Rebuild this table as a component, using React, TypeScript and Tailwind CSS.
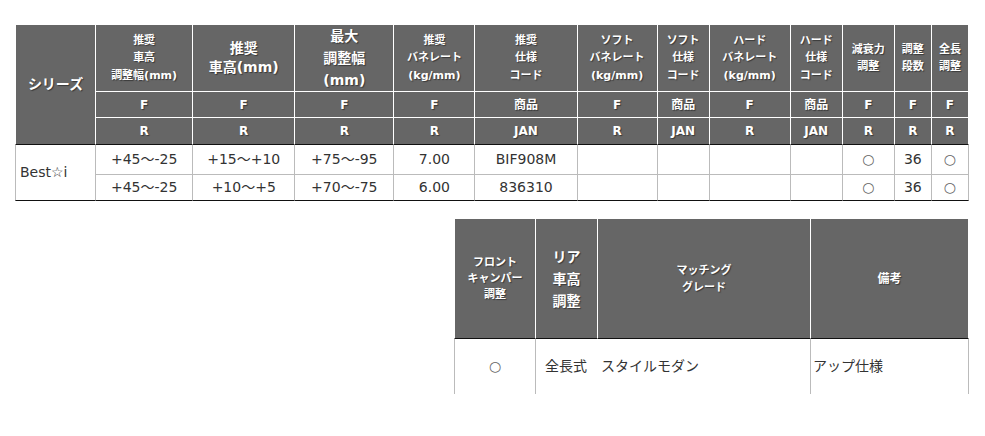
const font = "font-['DejaVu_Sans','Noto_Sans_CJK_JP',sans-serif]";
const hd =
  "bg-[#666666] text-white font-bold text-center align-middle border-r border-white [text-shadow:1px_1px_1px_rgba(0,0,0,0.45)]";
const td = "text-[14px] text-[#333333] text-center align-middle border-r border-[#bbbbbb]";

type HeadCol = { w: number; lines: string[]; big?: boolean; lead?: string };

const cols: HeadCol[] = [
  { w: 97, lines: ["推奨", "車高", "調整幅(mm)"] },
  { w: 102, lines: ["推奨", "車高(mm)"], big: true, lead: "leading-[19px]" },
  { w: 99, lines: ["最大", "調整幅", "(mm)"], big: true, lead: "leading-[22px]" },
  { w: 81, lines: ["推奨", "バネレート", "(kg/mm)"] },
  { w: 102, lines: ["推奨", "仕様", "コード"] },
  { w: 80, lines: ["ソフト", "バネレート", "(kg/mm)"] },
  { w: 52, lines: ["ソフト", "仕様", "コード"] },
  { w: 81, lines: ["ハード", "バネレート", "(kg/mm)"] },
  { w: 52, lines: ["ハード", "仕様", "コード"] },
  { w: 52, lines: ["減衰力", "調整"] },
  { w: 37, lines: ["調整", "段数"] },
  { w: 37, lines: ["全長", "調整"] },
];

const fRow = ["F", "F", "F", "F", "商品", "F", "商品", "F", "商品", "F", "F", "F"];
const rRow = ["R", "R", "R", "R", "JAN", "R", "JAN", "R", "JAN", "R", "R", "R"];

const body = [
  ["+45〜-25", "+15〜+10", "+75〜-95", "7.00", "BIF908M", "", "", "", "", "○", "36", "○"],
  ["+45〜-25", "+10〜+5", "+70〜-75", "6.00", "836310", "", "", "", "", "○", "36", "○"],
];

function Lines({ lines }: { lines: string[] }) {
  return (
    <>
      {lines.map((l, i) => (
        <div key={i}>{l}</div>
      ))}
    </>
  );
}

function SpecTable() {
  return (
    <table className="table-fixed border-separate border-spacing-0 w-[954px]">
      <colgroup>
        <col className="w-[81px]" />
        {cols.map((c, i) => (
          <col key={i} style={{ width: c.w }} />
        ))}
      </colgroup>
      <thead>
        <tr>
          <th rowSpan={3} className={`${hd} border-l border-b border-b-[#111] text-[14px]`}>
            シリーズ
          </th>
          {cols.map((c, i) => (
            <th
              key={i}
              className={`${hd} h-[67px] border-b ${
                c.big ? `text-[14px] ${c.lead}` : "text-[11px] leading-[17.5px]"
              }`}
            >
              <Lines lines={c.lines} />
            </th>
          ))}
        </tr>
        <tr>
          {fRow.map((t, i) => (
            <th key={i} className={`${hd} h-[26px] border-b text-[12px]`}>
              {t}
            </th>
          ))}
        </tr>
        <tr>
          {rRow.map((t, i) => (
            <th key={i} className={`${hd} h-[27px] border-b border-b-[#111] text-[12px]`}>
              {t}
            </th>
          ))}
        </tr>
      </thead>
      <tbody>
        {body.map((row, r) => (
          <tr key={r}>
            {r === 0 && (
              <td
                rowSpan={2}
                className="text-[14px] text-[#333333] text-left align-middle pl-[4px] border-l border-r border-[#bbbbbb] border-b border-b-[#111]"
              >
                Best☆i
              </td>
            )}
            {row.map((t, i) => (
              <td
                key={i}
                className={`${td} ${r === 0 ? "h-[30px] border-b border-b-[#bbbbbb]" : "h-[26px] border-b border-b-[#111]"} ${
                  t === "○" ? "text-[#666666]" : ""
                }`}
              >
                {t}
              </td>
            ))}
          </tr>
        ))}
      </tbody>
    </table>
  );
}

function GradeTable() {
  return (
    <table className="table-fixed border-separate border-spacing-0 w-[515px] ml-auto mt-[18px]">
      <colgroup>
        <col className="w-[82px]" />
        <col className="w-[62px]" />
        <col className="w-[213px]" />
        <col className="w-[158px]" />
      </colgroup>
      <thead>
        <tr>
          <th className={`${hd} border-l h-[120px] border-b border-b-[#111] text-[11px] leading-[16px]`}>
            <Lines lines={["フロント", "キャンパー", "調整"]} />
          </th>
          <th className={`${hd} border-b border-b-[#111] text-[14px] leading-[22px]`}>
            <Lines lines={["リア", "車高", "調整"]} />
          </th>
          <th className={`${hd} border-b border-b-[#111] text-[11px] leading-[17px]`}>
            <Lines lines={["マッチング", "グレード"]} />
          </th>
          <th className={`${hd} border-b border-b-[#111] text-[12px]`}>備考</th>
        </tr>
      </thead>
      <tbody>
        <tr>
          <td className={`${td} border-l h-[55px] text-[#666666]`}>○</td>
          <td colSpan={2} className={`${td} text-left pl-[9px]`}>
            全長式　スタイルモダン
          </td>
          <td className={`${td} text-left pl-[2px]`}>アップ仕様</td>
        </tr>
      </tbody>
    </table>
  );
}

export default function App() {
  return (
    <div className={`${font} bg-white w-[985px] h-[436px] pt-[25px] pl-[15px]`}>
      <div className="w-[954px]">
        <SpecTable />
        <GradeTable />
      </div>
    </div>
  );
}
